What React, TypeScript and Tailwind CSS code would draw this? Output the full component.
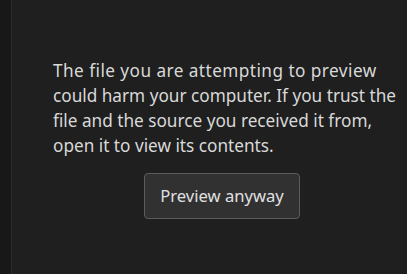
export default function App() {
  return (
    <div className="flex h-[274px] w-[407px] overflow-hidden bg-[#1f1f1f] font-['Noto_Sans',sans-serif] text-[#d9d9d9]">
      <div className="h-full w-[12px] shrink-0 border-r border-[#2b2b2b] bg-[#181818]" />
      <div className="flex flex-1 flex-col pl-[41px] pt-[58px]">
        <div className="flex w-[338px] flex-col items-center">
          <p className="flex w-full flex-col whitespace-nowrap text-[17.2px] leading-[25px]">
            <span className="tracking-[0.45px]">The file you are attempting to preview</span>
            <span>could harm your computer. If you trust the</span>
            <span>file and the source you received it from,</span>
            <span>open it to view its contents.</span>
          </p>
          <button className="mt-[15px] rounded-[4px] border border-[#5c5c5c] bg-[#313131] px-[15px] py-[10px] text-[16.6px] leading-[24px] text-[#e0e0e0]">
            Preview anyway
          </button>
        </div>
      </div>
    </div>
  );
}
